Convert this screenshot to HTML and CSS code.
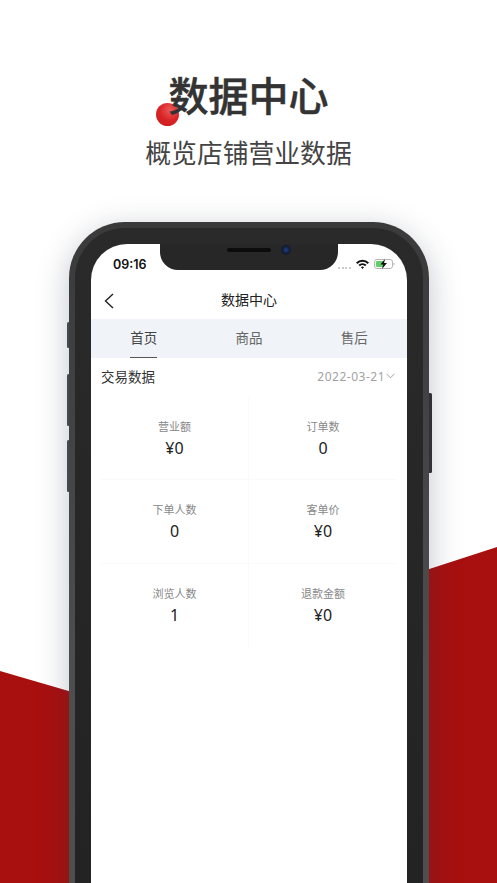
FILE: index.html
```html
<!DOCTYPE html>
<html lang="zh-CN">
<head>
<meta charset="utf-8">
<title>数据中心</title>
<link rel="stylesheet" href="styles.css">
</head>
<body>
<main class="poster">
  <div class="wave wave-left"></div>
  <div class="wave wave-right"></div>
  <header class="hero">
    <div class="hero-title-wrap">
      <span class="ball"></span>
      <h1 class="hero-title">数据中心</h1>
    </div>
    <p class="hero-sub">概览店铺营业数据</p>
  </header>
  <div class="phone">
    <span class="btn btn-mute"></span>
    <span class="btn btn-up"></span>
    <span class="btn btn-down"></span>
    <span class="btn btn-power"></span>
    <div class="bezel">
      <div class="screen">
        <div class="notch">
          <span class="speaker"></span>
          <span class="camera"></span>
        </div>
        <div class="status">
          <span class="time">09:16</span>
          <div class="status-icons">
            <span class="dots"><i></i><i></i><i></i><i></i></span>
            <svg class="wifi" viewBox="0 0 12 9" width="13" height="10"><path d="M0 3 A8.5 8.5 0 0 1 12 3 L10.7 4.4 A6.6 6.6 0 0 0 1.3 4.4Z M2.3 5.3 A5.2 5.2 0 0 1 9.7 5.3 L8.4 6.6 A3.4 3.4 0 0 0 3.6 6.6Z M4.6 7.5 A2 2 0 0 1 7.4 7.5 L6 9Z" fill="#111"/></svg>
            <svg class="battery" viewBox="0 0 21 10" width="21" height="10"><rect x=".5" y=".5" width="18" height="9" rx="2.4" fill="#fff" stroke="#b5b5b5"/><rect x="2" y="2" width="8" height="6" rx="1" fill="#5fd068"/><path d="M19.6 3.4 A1.8 1.8 0 0 1 19.6 6.6Z" fill="#aaa"/><path d="M11 0 L6.4 5.6 H9.2 L8 10 L13 4 H10.1Z" fill="#111"/></svg>
          </div>
        </div>
        <div class="nav">
          <svg class="back" viewBox="0 0 10 16" width="10" height="16"><path d="M9 1 L1.5 8 L9 15" fill="none" stroke="#222" stroke-width="1.4"/></svg>
          <span class="nav-title">数据中心</span>
        </div>
        <nav class="tabs">
          <span class="tab tab-active">首页</span>
          <span class="tab">商品</span>
          <span class="tab">售后</span>
        </nav>
        <div class="section-head">
          <span class="section-title">交易数据</span>
          <span class="date">2022-03-21<svg class="chev" viewBox="0 0 9 6" width="9" height="6"><path d="M.5 .8 L4.5 4.8 L8.5 .8" fill="none" stroke="#999" stroke-width=".9"/></svg></span>
        </div>
        <div class="stats">
          <div class="stat"><span class="stat-label">营业额</span><span class="stat-value">¥0</span></div>
          <div class="stat"><span class="stat-label">订单数</span><span class="stat-value">0</span></div>
          <div class="stat"><span class="stat-label">下单人数</span><span class="stat-value">0</span></div>
          <div class="stat"><span class="stat-label">客单价</span><span class="stat-value">¥0</span></div>
          <div class="stat"><span class="stat-label">浏览人数</span><span class="stat-value">1</span></div>
          <div class="stat"><span class="stat-label">退款金额</span><span class="stat-value">¥0</span></div>
        </div>
      </div>
    </div>
  </div>
</main>
</body>
</html>
```
FILE: styles.css
```css
* { box-sizing: border-box; }
html, body { margin: 0; padding: 0; height: 100%; overflow: hidden; background: #fff; }
body { font-family: "Noto Sans", "Noto Sans CJK SC", sans-serif; }

.poster { position: relative; width: 497px; height: 883px; overflow: hidden; background: #fff; }

.wave { position: absolute; background: #a81010; }
.wave-left { left: 0; bottom: 0; width: 120px; height: 212px; clip-path: polygon(0 0, 100% 35px, 100% 100%, 0 100%); }
.wave-right { right: 0; bottom: 0; width: 120px; height: 336px; clip-path: polygon(0 39px, 100% 0, 100% 100%, 0 100%); }

.hero { position: relative; display: flex; flex-direction: column; align-items: center; padding-top: 65px; }
.hero-title-wrap { position: relative; }
.hero-title { position: relative; margin: 0; font-family: "Noto Sans CJK SC", sans-serif; font-size: 40px; line-height: 58px; font-weight: 500; -webkit-text-stroke: .5px #333; color: #333; }
.ball { position: absolute; left: -13px; top: 38px; width: 23px; height: 23px; border-radius: 50%; background: radial-gradient(circle at 62% 30%, #ec5a5a 0%, #d92326 50%, #c81c1f 100%); }
.hero-sub { margin: 0; font-family: "Noto Sans CJK SC", sans-serif; font-size: 25.8px; line-height: 38px; color: #444; font-weight: 400; margin-top: 10px; }

.phone { position: relative; width: 360px; height: 740px; margin: 51px 0 0 69px; }
.btn { position: absolute; background: #4a4d5a; border-radius: 1.5px 0 0 1.5px; width: 3px; left: -2px; }
.btn-mute { top: 100px; height: 26px; }
.btn-up { top: 152px; height: 52px; }
.btn-down { top: 218px; height: 52px; }
.btn-power { left: auto; right: -3px; top: 171px; height: 80px; border-radius: 0 1.5px 1.5px 0; background: #333; }

.bezel { position: relative; width: 100%; height: 100%; padding: 16px 16px 0; border-radius: 56px; border: 6px solid transparent; background: linear-gradient(#2a2a2a, #222) padding-box, linear-gradient(180deg, #3a3a3a, #4e4e4e 60%) border-box; box-shadow: 0 8px 32px rgba(40, 45, 70, .28); }
.screen { position: relative; width: 316px; height: 700px; background: #fff; border-radius: 36px 36px 0 0; overflow: hidden; }

.notch { position: absolute; left: 69px; top: 0; width: 178px; height: 26px; background: #272727; border-radius: 0 0 18px 18px; }
.speaker { position: absolute; left: 67px; top: 4px; width: 44px; height: 4px; border-radius: 2px; background: #0c0c0c; }
.camera { position: absolute; left: 121px; top: 1px; width: 10px; height: 10px; border-radius: 50%; background: radial-gradient(circle, #1f3f86 0%, #14213f 45%, #111 100%); }

.status { display: flex; justify-content: space-between; align-items: center; height: 38px; padding: 14px 12px 12px 22px; }
.time { font-family: "Inter", sans-serif; font-size: 12.5px; font-weight: 600; color: #111; }
.status-icons { display: flex; align-items: center; gap: 5px; }
.dots { display: flex; gap: 1.6px; align-self: flex-end; }
.dots i { display: block; width: 2px; height: 2px; border-radius: 50%; background: #bbb; }

.nav { position: relative; display: flex; align-items: center; justify-content: center; height: 37px; padding-bottom: 3px; }
.back { position: absolute; left: 13px; top: 11px; }
.nav-title { font-size: 14px; font-family: "Noto Sans CJK SC", sans-serif; color: #222; }

.tabs { display: grid; grid-template-columns: repeat(3, 1fr); height: 39px; background: #f0f3f7; }
.tab { justify-self: center; height: 39px; line-height: 36px; font-family: "Noto Sans CJK SC", sans-serif; font-size: 13.5px; color: #666; }
.tab-active { color: #444; border-bottom: 1px solid #555; }

.section-head { display: flex; justify-content: space-between; align-items: center; height: 39px; padding: 0 12px 3px 10px; }
.section-title { font-family: "Noto Sans CJK SC", sans-serif; font-size: 13.5px; color: #333; }
.date { display: flex; align-items: center; font-family: "Noto Sans", sans-serif; font-size: 12px; letter-spacing: .5px; color: #a2a2a2; }
.chev { margin-left: 1px; }

.stats { display: grid; grid-template-columns: 148px 148px; grid-auto-rows: 83.3px; margin: 0 10px; }
.stat { display: flex; flex-direction: column; align-items: center; padding-top: 21px; border-bottom: 1px solid #fafafa; border-right: 1px solid #fafafa; }
.stat:nth-child(2n) { border-right: 0; }
.stat:nth-child(n+5) { border-bottom: 0; }
.stat-label { font-family: "Noto Sans CJK SC", sans-serif; font-size: 11px; line-height: 16px; color: #888; }
.stat-value { font-family: "Noto Sans", sans-serif; font-size: 16px; line-height: 22px; margin-top: 3px; font-weight: 400; color: #222; }
```
